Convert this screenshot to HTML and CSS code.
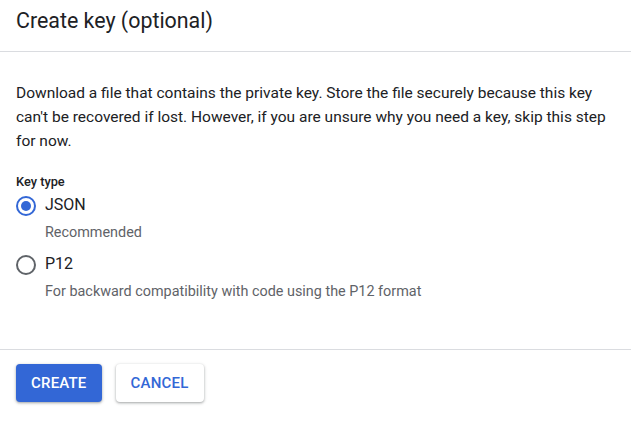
FILE: index.html
```html
<!DOCTYPE html>
<html>
<head>
<meta charset="utf-8">
<link rel="stylesheet" href="styles.css">
</head>
<body>
<div class="dialog">
  <header class="dialog-header">
    <h1 class="dialog-title">Create key (optional)</h1>
  </header>
  <section class="dialog-body">
    <p class="intro">Download a file that contains the private key. Store the file securely because this key can't be recovered if lost. However, if you are unsure why you need a key, skip this step for now.</p>
    <div class="field-label">Key type</div>
    <div class="radio-group">
      <label class="radio-option">
        <span class="radio checked"><span class="dot"></span></span>
        <span class="radio-text">
          <span class="radio-label">JSON</span>
          <span class="radio-hint">Recommended</span>
        </span>
      </label>
      <label class="radio-option">
        <span class="radio"></span>
        <span class="radio-text">
          <span class="radio-label">P12</span>
          <span class="radio-hint">For backward compatibility with code using the P12 format</span>
        </span>
      </label>
    </div>
  </section>
  <footer class="dialog-actions">
    <button class="btn btn-primary">CREATE</button>
    <button class="btn btn-secondary">CANCEL</button>
  </footer>
</div>
</body>
</html>
```
FILE: styles.css
```css
html, body {
  margin: 0;
  padding: 0;
  background: #fff;
}
body {
  font-family: Roboto, "Liberation Sans", Arial, sans-serif;
  color: #202124;
  -webkit-font-smoothing: antialiased;
}
.dialog {
  width: 631px;
}
.dialog-header {
  height: 51px;
  border-bottom: 1px solid #dadce0;
  display: flex;
  align-items: center;
  padding: 0 16px;
}
.dialog-title {
  margin: 0;
  font-size: 21.4px;
  font-weight: 400;
  line-height: 28px;
  color: #202124;
  margin-top: -9px;
}
.dialog-body {
  padding: 29px 16px 47px 16px;
}
.intro {
  margin: 0;
  font-size: 15.5px;
  line-height: 24px;
  color: #202124;
}
.field-label {
  margin-top: 21px;
  font-size: 12.8px;
  font-weight: 500;
  line-height: 16px;
  color: #202124;
}
.radio-group {
  display: flex;
  flex-direction: column;
  gap: 9px;
  margin-top: 3px;
}
.radio-option {
  display: flex;
  align-items: flex-start;
  gap: 9px;
}
.radio {
  width: 16px;
  height: 16px;
  border: 2px solid #5f6368;
  border-radius: 50%;
  display: flex;
  align-items: center;
  justify-content: center;
  margin-top: 3px;
  flex: none;
}
.radio.checked {
  border-color: #3367d6;
}
.radio .dot {
  width: 10px;
  height: 10px;
  border-radius: 50%;
  background: #3367d6;
}
.radio-text {
  display: flex;
  flex-direction: column;
}
.radio-label {
  font-size: 16px;
  line-height: 24px;
  color: #202124;
}
.radio-hint {
  font-size: 14.4px;
  line-height: 20px;
  color: #5f6368;
  margin-top: 6px;
}
.dialog-actions {
  border-top: 1px solid #dadce0;
  padding: 14px 16px;
  display: flex;
  gap: 14px;
}
.btn {
  font-family: Roboto, "Liberation Sans", Arial, sans-serif;
  font-size: 15px;
  font-weight: 500;
  letter-spacing: 0.2px;
  height: 38px;
  padding: 0 15px;
  border-radius: 4px;
  border: none;
  cursor: pointer;
}
.btn-primary {
  background: #3367d6;
  color: #fff;
  box-shadow: 0 1px 2px rgba(60,64,67,0.3), 0 1px 3px 1px rgba(60,64,67,0.15);
}
.btn-secondary {
  background: #fff;
  color: #3367d6;
  box-shadow: 0 1px 2px rgba(60,64,67,0.3), 0 1px 3px 1px rgba(60,64,67,0.15);
}
```
